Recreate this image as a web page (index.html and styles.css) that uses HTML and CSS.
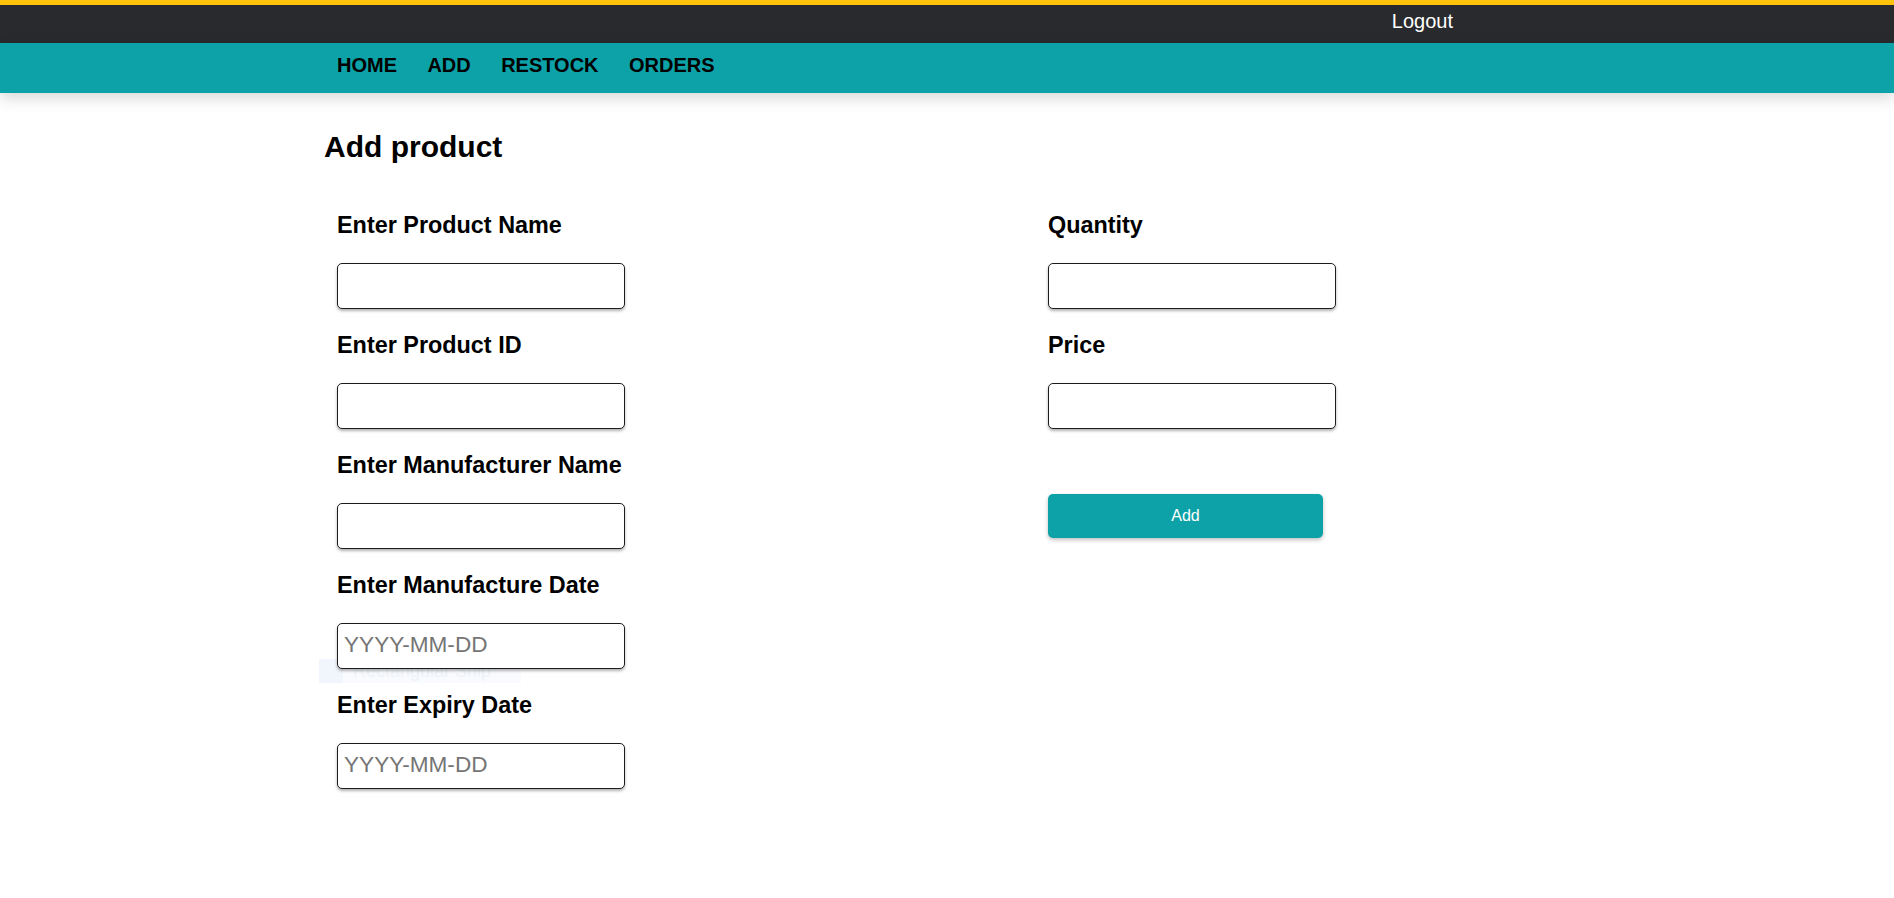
FILE: index.html
```html
<!DOCTYPE html>
<html lang="en">
<head>
<meta charset="utf-8">
<title>Add product</title>
<link rel="stylesheet" href="styles.css">
</head>
<body>
<header class="topbar">
  <div class="container topbar-inner">
    <a class="logout" href="#">Logout</a>
  </div>
</header>
<nav class="navbar">
  <div class="container nav-inner">
    <a class="nav-link" href="#">HOME</a>
    <a class="nav-link" href="#">ADD</a>
    <a class="nav-link" href="#">RESTOCK</a>
    <a class="nav-link" href="#">ORDERS</a>
  </div>
</nav>
<main class="container page">
  <h1 class="title">Add product</h1>
  <form class="form">
    <div class="col">
      <div class="field">
        <label class="label">Enter Product Name</label>
        <input class="input" type="text">
      </div>
      <div class="field">
        <label class="label">Enter Product ID</label>
        <input class="input" type="text">
      </div>
      <div class="field">
        <label class="label">Enter Manufacturer Name</label>
        <input class="input" type="text">
      </div>
      <div class="field">
        <label class="label">Enter Manufacture Date</label>
        <input class="input" type="text" placeholder="YYYY-MM-DD">
      </div>
      <div class="field">
        <label class="label">Enter Expiry Date</label>
        <input class="input" type="text" placeholder="YYYY-MM-DD">
      </div>
    </div>
    <div class="col">
      <div class="field">
        <label class="label">Quantity</label>
        <input class="input" type="text">
      </div>
      <div class="field">
        <label class="label">Price</label>
        <input class="input" type="text">
      </div>
      <button class="btn" type="button">Add</button>
    </div>
  </form>
</main>
<div class="ghost"><span class="ghost-icon"></span><span class="ghost-text">Rectangular Snip</span></div>
</body>
</html>
```

FILE: styles.css
```css
* { box-sizing: border-box; }
html { background: #fff; }
body {
  margin: 0;
  padding: 0;
  font-family: "Liberation Sans", Arial, sans-serif;
  color: #000;
  overflow: hidden;
}
.container {
  width: 1246px;
  margin: 0 auto;
}
.topbar {
  background: #292a2d;
  border-top: 5px solid #ffc20a;
  height: 43px;
}
.topbar-inner {
  display: flex;
  justify-content: flex-end;
  padding: 5px 117px 0 0;
}
.logout {
  color: #fff;
  text-decoration: none;
  font-size: 20px;
  line-height: 23px;
}
.navbar {
  background: #0da2a8;
  height: 50px;
  box-shadow: 0 5px 16px rgba(0, 0, 0, 0.16);
  position: relative;
}
.nav-inner {
  display: flex;
  gap: 30.4px;
  padding: 11px 0 0 13px;
}
.nav-link {
  color: #000;
  text-decoration: none;
  font-weight: bold;
  font-size: 20px;
  line-height: 23px;
}
.page {
  padding-top: 37px;
}
.title {
  margin: 0;
  font-size: 30px;
  line-height: 34px;
  font-weight: bold;
}
.form {
  display: grid;
  grid-template-columns: 711px 1fr;
  padding: 48px 0 0 13px;
}
.col {
  display: flex;
  flex-direction: column;
  align-items: flex-start;
}
.field {
  display: flex;
  flex-direction: column;
  margin-bottom: 23px;
}
.label {
  font-weight: bold;
  font-size: 23.4px;
  line-height: 26px;
  margin-bottom: 25px;
}
.input {
  width: 288px;
  height: 46px;
  border: 1px solid #1c1c1c;
  border-radius: 5px;
  box-shadow: 0 2px 3px rgba(0, 0, 0, 0.3);
  font-family: "Liberation Sans", Arial, sans-serif;
  font-size: 22.6px;
  padding: 0 6px 3px;
  background: #fff;
  outline: none;
}
.input::placeholder {
  color: #757575;
}
.btn {
  margin-top: 42px;
  width: 275px;
  height: 44px;
  border: none;
  border-radius: 5px;
  background: #0da2a8;
  color: #fff;
  font-family: "Liberation Sans", Arial, sans-serif;
  font-size: 16px;
  box-shadow: 0 2px 4px rgba(0, 0, 0, 0.25);
}
.ghost {
  position: absolute;
  left: 319px;
  top: 659px;
  width: 202px;
  height: 24px;
  background: #f9fbfe;
  display: flex;
  align-items: center;
  z-index: -1;
}
.ghost-icon {
  width: 24px;
  height: 24px;
  background: #f1f6fc;
}
.ghost-text {
  margin-left: 10px;
  font-family: "Liberation Sans", Arial, sans-serif;
  font-size: 18px;
  color: #eff3f8;
}
```
